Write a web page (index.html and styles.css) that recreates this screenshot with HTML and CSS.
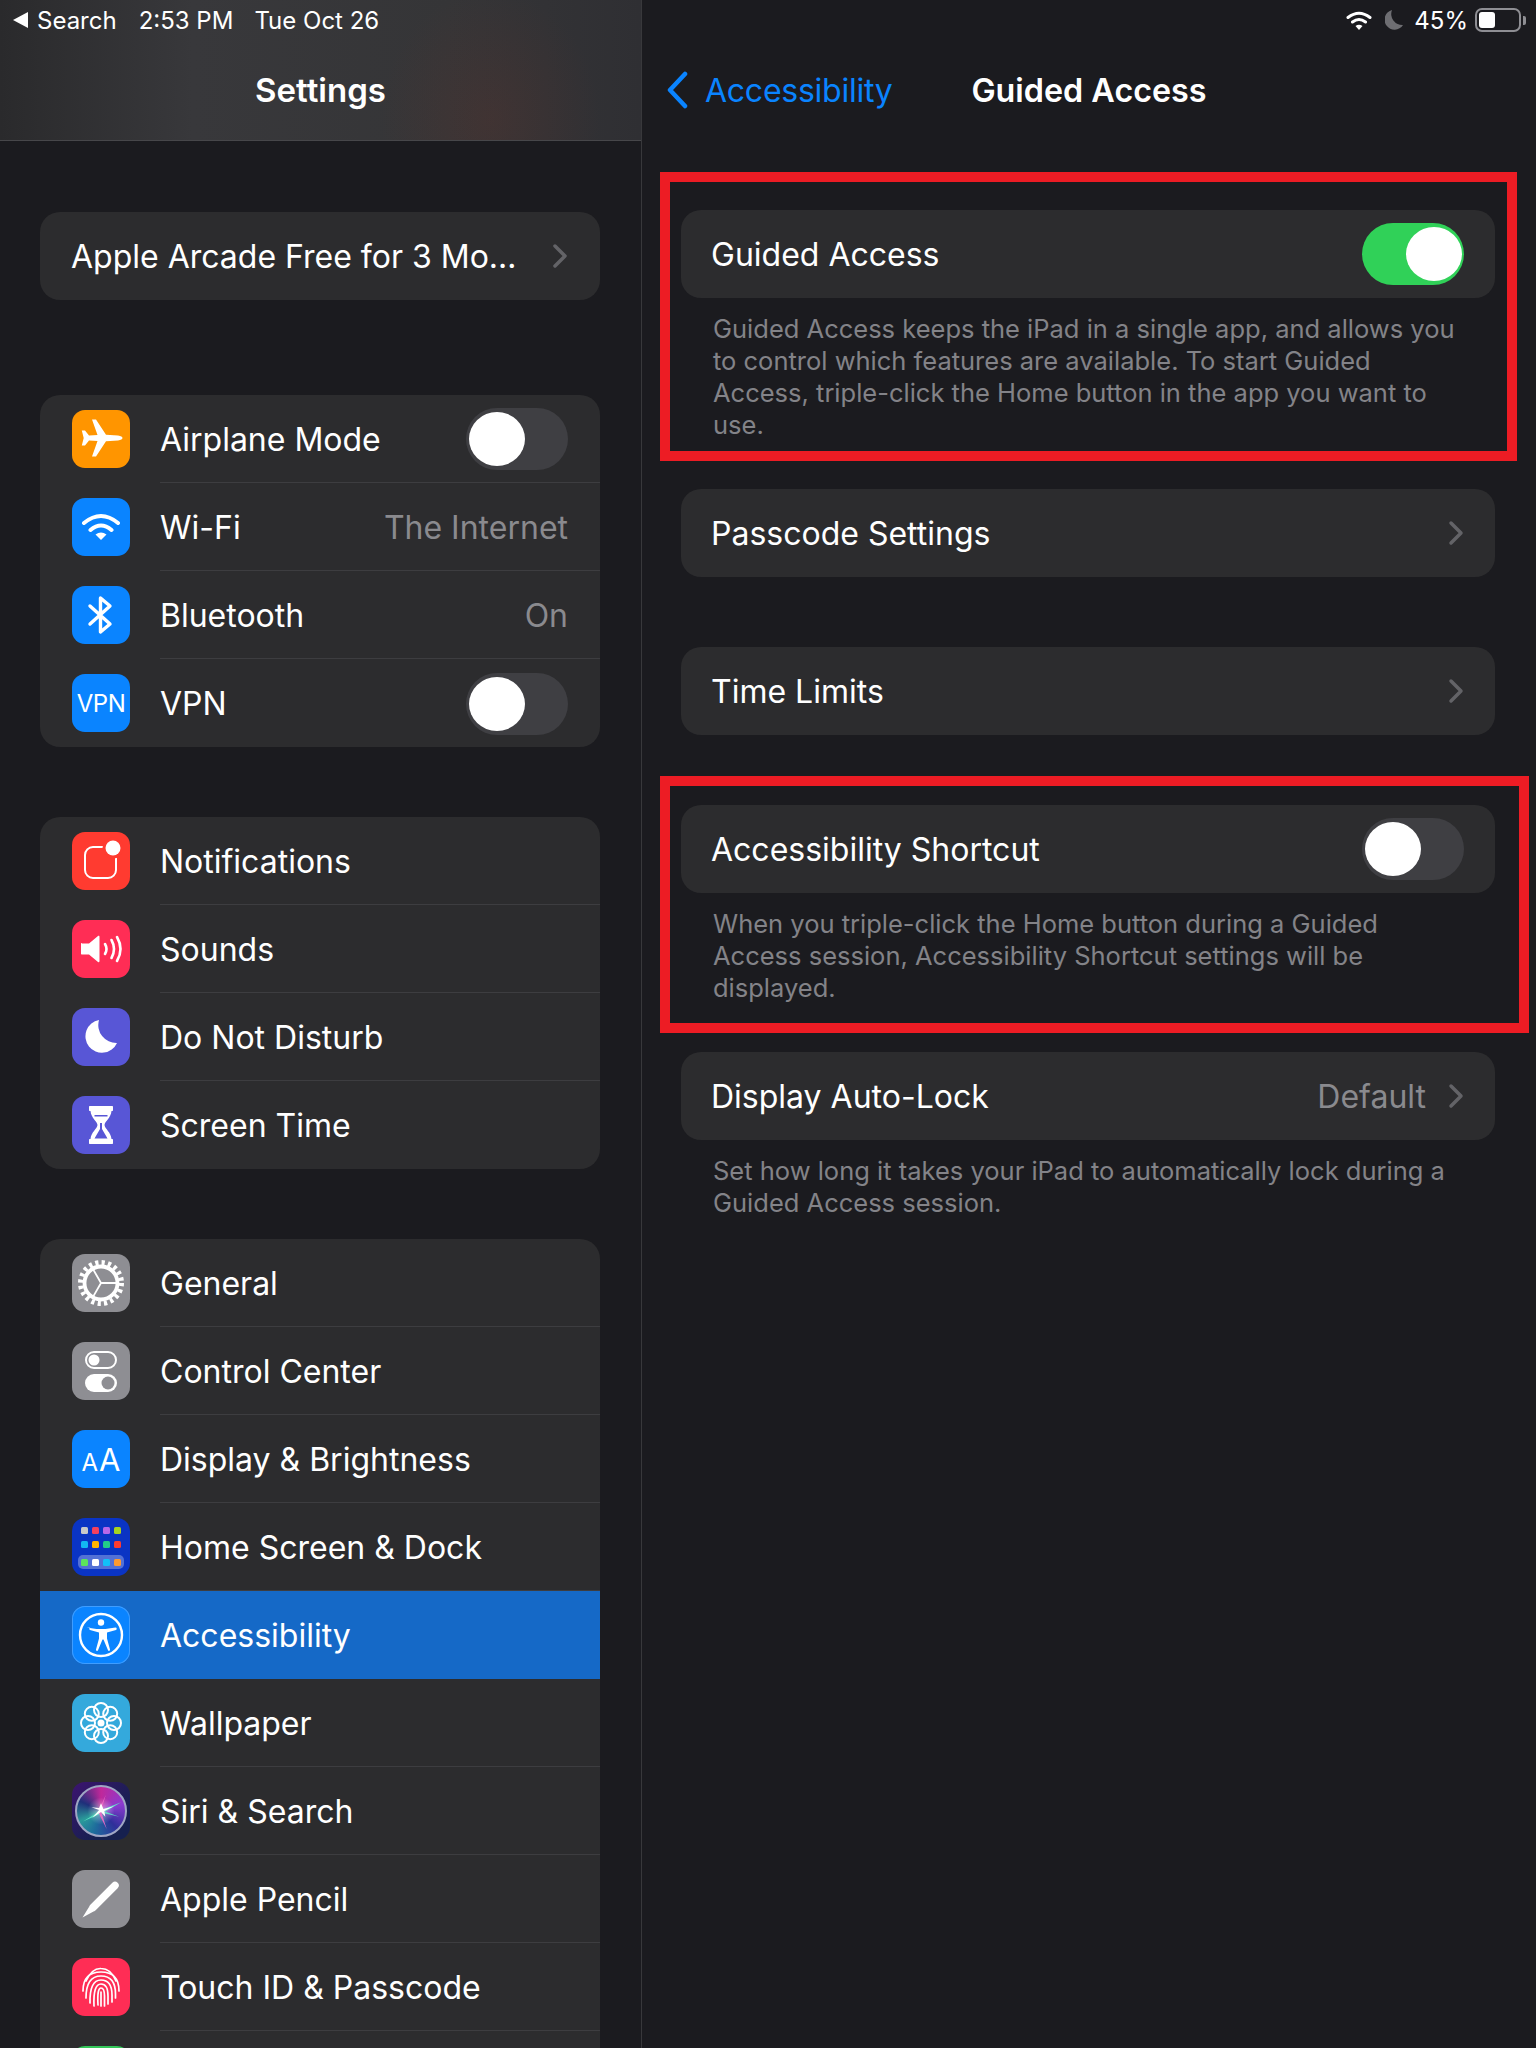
FILE: index.html
```html
<!DOCTYPE html>
<html lang="en">
<head>
    <meta charset="UTF-8">
    <title>Guided Access</title>
    <link rel="stylesheet" href="styles.css">
</head>
<body>
    <div class="sidebar">
        <header class="side-head">
            <div class="status">
                <span class="back-tri"></span>
                <span class="status-search">Search</span>
                <span class="status-time">2:53 PM</span>
                <span>Tue Oct 26</span>
            </div>
            <h1 class="side-title">Settings</h1>
        </header>

        <div class="card promo">
            <div class="row">
                <span class="label">Apple Arcade Free for 3 Mo…</span>
                <svg class="chevron" viewBox="0 0 16 26"><path d="M3 3l10 10L3 23"/></svg>
            </div>
        </div>

        <div class="card group-first">
            <div class="row">
                <span class="icon orange">
                    <svg viewBox="0 0 58 58"><path fill="#fff" d="M46 25.500c3 .4 4.500 1.500 4.500 2.500s-1.500 2.100-4.500 2.500l-12 .8-10 15.200h-4l5.500-15.500-8.500-.5-4 5h-3.200l1.900-7.500-1.900-7.500h3.200l4 5 8.500-.5-5.500-15.500h4l10 15.200z"/></svg>
                </span>
                <div class="row-body">
                    <span class="label">Airplane Mode</span>
                    <span class="toggle"><span class="knob"></span></span>
                </div>
            </div>
            <div class="row">
                <span class="icon blue">
                    <svg viewBox="0 0 58 58"><path class="line" stroke-width="4" d="M12 25Q29 11 46 25M18.500 32Q29 23 39.500 32"/><path fill="#fff" d="M29 42l-5.500-5.500Q29 32.500 34.500 36.500z"/></svg>
                </span>
                <div class="row-body">
                    <span class="label">Wi-Fi</span>
                    <span class="value">The Internet</span>
                </div>
            </div>
            <div class="row">
                <span class="icon blue">
                    <svg viewBox="0 0 58 58"><path class="line" stroke-width="3.400" d="M18 20l20 18-9.500 8V12L38 20 18 38"/></svg>
                </span>
                <div class="row-body">
                    <span class="label">Bluetooth</span>
                    <span class="value">On</span>
                </div>
            </div>
            <div class="row">
                <span class="icon blue"><span class="icon-text vpn">VPN</span></span>
                <div class="row-body">
                    <span class="label">VPN</span>
                    <span class="toggle"><span class="knob"></span></span>
                </div>
            </div>
        </div>

        <div class="card group">
            <div class="row">
                <span class="icon red">
                    <svg viewBox="0 0 58 58"><rect class="line" stroke-width="2" x="13" y="15" width="31" height="31" rx="8"/><circle cx="41" cy="16" r="10.500" fill="#ff3b30"/><circle cx="41" cy="16" r="7.500" fill="#fff"/></svg>
                </span>
                <div class="row-body"><span class="label">Notifications</span></div>
            </div>
            <div class="row">
                <span class="icon pink">
                    <svg viewBox="0 0 58 58"><path fill="#fff" d="M10 23.500h7l9-7.500c1-.5 1.500 0 1.500 1v24c0 1-.5 1.500-1.500 1l-9-7.500h-7c-.7 0-1-.4-1-1v-9.500c0-.6.300-1 1-1z"/><path class="line" stroke-width="2.600" d="M33 24q3 5 0 10M39.500 20q5 9 0 18M45 17q7 12 0 24"/></svg>
                </span>
                <div class="row-body"><span class="label">Sounds</span></div>
            </div>
            <div class="row">
                <span class="icon indigo">
                    <svg viewBox="0 0 58 58"><path fill="#fff" d="M27 12A16.500 16.500 0 1 0 45 35 A18 18 0 0 1 27 12z"/></svg>
                </span>
                <div class="row-body"><span class="label">Do Not Disturb</span></div>
            </div>
            <div class="row">
                <span class="icon indigo">
                    <svg viewBox="0 0 58 58"><path fill="#fff" d="M18 10h22c.7 0 1 .4 1 1v3c0 .6-.3 1-1 1h-.5c-.6 7-6.500 10-7 14 .5 4 6.400 7 7 14h.5c.7 0 1 .4 1 1v3c0 .6-.3 1-1 1H18c-.7 0-1-.4-1-1v-3c0-.6.300-1 1-1h.5c.6-7 6.500-10 7-14-.5-4-6.400-7-7-14H18c-.7 0-1-.4-1-1v-3c0-.6.300-1 1-1z"/><path fill="#5856d6" d="M22.500 19h13v1.500h-13zM28 27h2v6l5.500 9.500h-13L28 33z"/></svg>
                </span>
                <div class="row-body"><span class="label">Screen Time</span></div>
            </div>
        </div>

        <div class="card group">
            <div class="row">
                <span class="icon grey">
                    <svg viewBox="0 0 58 58"><circle fill="none" stroke="#fff" stroke-width="5" stroke-dasharray="3.200 3.240" cx="29" cy="29" r="20.500"/><circle class="line" stroke-width="3.800" cx="29" cy="29" r="16.500"/><path class="line" stroke-width="1.800" d="M29 29h16M29 29l-8-13.900M29 29l-8 13.900"/></svg>
                </span>
                <div class="row-body"><span class="label">General</span></div>
            </div>
            <div class="row">
                <span class="icon grey">
                    <svg viewBox="0 0 58 58"><rect class="line" stroke-width="2" x="14" y="10" width="30" height="16" rx="8"/><circle cx="22" cy="18" r="5.500" fill="#fff"/><rect x="13" y="32" width="32" height="18" rx="9" fill="#fff"/><circle cx="36" cy="41" r="6.500" fill="#8e8e93"/></svg>
                </span>
                <div class="row-body"><span class="label">Control Center</span></div>
            </div>
            <div class="row">
                <span class="icon blue"><span class="icon-text aa"><small>A</small>A</span></span>
                <div class="row-body"><span class="label">Display &amp; Brightness</span></div>
            </div>
            <div class="row">
                <span class="icon navy">
                    <svg viewBox="0 0 58 58">
                        <rect x="6" y="37" width="46" height="14" rx="5" fill="#fff" fill-opacity=".3"/>
                        <rect x="9" y="9" width="7" height="7" rx="1.500" fill="#c9c9c9"/>
                        <rect x="20" y="9" width="7" height="7" rx="1.500" fill="#f4405e"/>
                        <rect x="31" y="9" width="7" height="7" rx="1.500" fill="#b867e8"/>
                        <rect x="42" y="9" width="7" height="7" rx="1.500" fill="#a5d321"/>
                        <rect x="9" y="23" width="7" height="7" rx="1.500" fill="#12b8f2"/>
                        <rect x="20" y="23" width="7" height="7" rx="1.500" fill="#ffb300"/>
                        <rect x="31" y="23" width="7" height="7" rx="1.500" fill="#22cc88"/>
                        <rect x="42" y="23" width="7" height="7" rx="1.500" fill="#ff3b30"/>
                        <rect x="9" y="41" width="7" height="7" rx="1.500" fill="#5ce65c"/>
                        <rect x="20" y="41" width="7" height="7" rx="1.500" fill="#fff"/>
                        <rect x="31" y="41" width="7" height="7" rx="1.500" fill="#12c0f8"/>
                        <rect x="42" y="41" width="7" height="7" rx="1.500" fill="#ff9a2e"/>
                    </svg>
                </span>
                <div class="row-body"><span class="label">Home Screen &amp; Dock</span></div>
            </div>
            <div class="row selected">
                <span class="icon blue ringed">
                    <svg viewBox="0 0 58 58"><circle class="line" stroke-width="2.400" cx="29" cy="29" r="21"/><circle cx="29" cy="16.500" r="3.200" fill="#fff"/><path fill="#fff" d="M14.500 21.500l10 1.500h9l10-1.500c1.500 0 1.500 2 .5 2.500l-9 2.500v6l3 11c.3 1.500-1.500 2-2 .8l-4.500-10.800h-1l-4.500 10.800c-.5 1.200-2.300.7-2-.8l3-11v-6l-9-2.500c-1-.5-1-2.500.5-2.500z"/></svg>
                </span>
                <div class="row-body"><span class="label">Accessibility</span></div>
            </div>
            <div class="row">
                <span class="icon sky">
                    <svg viewBox="0 0 58 58">
                        <g class="line" stroke-width="2">
                            <circle cx="29" cy="16" r="7"/><circle cx="38.200" cy="19.800" r="7"/><circle cx="42" cy="29" r="7"/><circle cx="38.200" cy="38.200" r="7"/>
                            <circle cx="29" cy="42" r="7"/><circle cx="19.800" cy="38.200" r="7"/><circle cx="16" cy="29" r="7"/><circle cx="19.800" cy="19.800" r="7"/>
                        </g>
                        <circle cx="29" cy="29" r="3.500" fill="#fff"/>
                    </svg>
                </span>
                <div class="row-body"><span class="label">Wallpaper</span></div>
            </div>
            <div class="row">
                <span class="icon siri">
                    <span class="siri-orb">
                        <svg viewBox="0 0 50 50">
                            <path fill="#5ff0c8" fill-opacity=".85" d="M25 24L46 16 27 27 44 31zM24 25L6 36 24 28z"/>
                            <path fill="#f06ac8" fill-opacity=".9" d="M25 25l6 19-9-18zM25 25L30 8l-7 16z"/>
                            <path fill="#fff" d="M25 17l2.500 6 11-3-10 5 1 6-4.500-5-9 6 7-8-8-3 8 1z"/>
                        </svg>
                    </span>
                </span>
                <div class="row-body"><span class="label">Siri &amp; Search</span></div>
            </div>
            <div class="row">
                <span class="icon grey">
                    <svg viewBox="0 0 58 58"><path class="line" stroke-width="7.500" d="M43 15.500L21 37.500"/><path fill="#fff" d="M17 37l4.500 4.500-11 6z"/></svg>
                </span>
                <div class="row-body"><span class="label">Apple Pencil</span></div>
            </div>
            <div class="row">
                <span class="icon pink">
                    <svg viewBox="0 0 58 58"><g class="line" stroke-width="1.700">
                        <path d="M14 23Q20 10 29 10.500 39 10.500 44 23"/>
                        <path d="M11 33Q11 14 29 14 47 14 47 33"/>
                        <path d="M14 40Q14 18 29 18 43.500 18 43.500 36v4"/>
                        <path d="M18 45Q17.500 22 29 22 40 22 40 37v7"/>
                        <path d="M22 48Q21 26 29 26 36 26 36 38v8"/>
                        <path d="M26 47q-1-17 3-17 3.500 0 3.500 8v10"/>
                        <path d="M29 34v14"/>
                    </g></svg>
                </span>
                <div class="row-body"><span class="label">Touch ID &amp; Passcode</span></div>
            </div>
            <div class="row">
                <span class="icon green"></span>
                <div class="row-body"></div>
            </div>
        </div>
    </div>

    <main class="detail">
        <header class="detail-head">
            <div class="status status-right">
                <svg class="st-wifi" viewBox="0 0 26 20"><path class="line" stroke-width="3" d="M2 7.500Q13-1 24 7.500M6.500 12Q13 7 19.500 12"/><path fill="#fff" d="M13 20l-3.500-4q3.500-2.500 7 0z"/></svg>
                <svg class="st-moon" viewBox="0 0 18 20"><path fill="#6e6e72" d="M7 0A10 10 0 1 0 18 15 A11 11 0 0 1 7 0z"/></svg>
                <span>45%</span>
                <span class="battery"><span class="battery-fill"></span></span>
                <span class="battery-cap"></span>
            </div>
            <div class="navbar">
                <a class="back">
                    <svg class="back-chevron" viewBox="0 0 24 38"><path d="M20 3L5 19l15 16"/></svg>
                    <span>Accessibility</span>
                </a>
                <h2 class="detail-title">Guided Access</h2>
                <span></span>
            </div>
        </header>

        <section class="block first-block">
            <div class="card">
                <div class="row plain">
                    <span class="label">Guided Access</span>
                    <span class="toggle on"><span class="knob"></span></span>
                </div>
            </div>
            <p class="note">Guided Access keeps the iPad in a single app, and allows you to control which features are available. To start Guided Access, triple-click the Home button in the app you want to use.</p>
            <div class="callout callout-one"></div>
        </section>

        <section class="block passcode">
            <div class="card">
                <div class="row plain">
                    <span class="label">Passcode Settings</span>
                    <svg class="chevron" viewBox="0 0 16 26"><path d="M3 3l10 10L3 23"/></svg>
                </div>
            </div>
        </section>

        <section class="block limits">
            <div class="card">
                <div class="row plain">
                    <span class="label">Time Limits</span>
                    <svg class="chevron" viewBox="0 0 16 26"><path d="M3 3l10 10L3 23"/></svg>
                </div>
            </div>
        </section>

        <section class="block shortcut">
            <div class="card">
                <div class="row plain">
                    <span class="label">Accessibility Shortcut</span>
                    <span class="toggle"><span class="knob"></span></span>
                </div>
            </div>
            <p class="note">When you triple-click the Home button during a Guided Access session, Accessibility Shortcut settings will be displayed.</p>
            <div class="callout callout-two"></div>
        </section>

        <section class="block autolock">
            <div class="card">
                <div class="row plain">
                    <span class="label">Display Auto-Lock</span>
                    <span class="value-group">
                        <span class="value">Default</span>
                        <svg class="chevron" viewBox="0 0 16 26"><path d="M3 3l10 10L3 23"/></svg>
                    </span>
                </div>
            </div>
            <p class="note">Set how long it takes your iPad to automatically lock during a Guided Access session.</p>
        </section>
    </main>
</body>
</html>
```

FILE: styles.css
```css
* {
    box-sizing: border-box;
}

body {
    margin: 0;
    width: 1536px;
    height: 2048px;
    overflow: hidden;
    display: flex;
    background-color: #1b1b1f;
    color: #fff;
    font-family: Inter, "Liberation Sans", sans-serif;
    font-size: 32px;
}

h1, h2, p {
    margin: 0;
    font-weight: 600;
}

svg {
    display: block;
}

.line {
    fill: none;
    stroke: #fff;
    stroke-linecap: round;
    stroke-linejoin: round;
}

/* left column */

.sidebar {
    width: 642px;
    flex-shrink: 0;
    border-right: 1px solid #38383b;
    height: 2048px;
    overflow: hidden;
}

.side-head {
    height: 141px;
    border-bottom: 1px solid #47474a;
    background:
        radial-gradient(ellipse 110px 130px at 490px 120px, rgba(110, 50, 40, 0.22), transparent),
        linear-gradient(90deg, #2a2a2c, #38383b 30%, #353537 70%, #2f2f33);
}

.status {
    height: 40px;
    display: flex;
    align-items: center;
    font-size: 24px;
    padding-left: 13px;
}

.back-tri {
    width: 0;
    height: 0;
    border-top: 8px solid transparent;
    border-bottom: 8px solid transparent;
    border-right: 15px solid #fff;
    margin-right: 9px;
}

.status-search {
    margin-right: 22px;
}

.status-time {
    margin-right: 21px;
}

.side-title {
    font-size: 33px;
    text-align: center;
    line-height: 40px;
    margin-top: 30px;
}

.card {
    background-color: #2c2c2e;
    border-radius: 20px;
    overflow: hidden;
}

.sidebar .card {
    margin-left: 40px;
    margin-right: 41px;
}

.promo {
    margin-top: 71px;
}

.group-first {
    margin-top: 95px;
}

.group {
    margin-top: 70px;
}

.row {
    height: 88px;
    display: flex;
    align-items: center;
    padding-left: 32px;
}

.promo .row {
    justify-content: space-between;
    padding-left: 31px;
    padding-right: 32px;
}

.row.plain {
    justify-content: space-between;
    padding: 0 31px 0 30px;
}

.row.selected {
    background-color: #1569c7;
}

.row.selected .row-body {
    border-bottom-color: transparent;
}

.row-body {
    flex: 1;
    height: 88px;
    margin-left: 30px;
    padding: 1px 32px 0 0;
    display: flex;
    align-items: center;
    justify-content: space-between;
    border-bottom: 1px solid #3d3d40;
}

.row:last-child .row-body {
    border-bottom: none;
}

.value {
    color: #8a8a8e;
}

.value-group {
    display: flex;
    align-items: center;
    gap: 22px;
}

.chevron {
    width: 16px;
    height: 26px;
}

.chevron path {
    fill: none;
    stroke: #636367;
    stroke-width: 3.5;
    stroke-linecap: round;
    stroke-linejoin: round;
}

/* settings icons */

.icon {
    width: 58px;
    height: 58px;
    flex-shrink: 0;
    border-radius: 13px;
    display: flex;
    align-items: center;
    justify-content: center;
}

.icon svg {
    width: 58px;
    height: 58px;
}

.orange { background-color: #ff9500; }
.blue { background-color: #0a84ff; }
.red { background-color: #ff3b30; }
.pink { background-color: #ff2d55; }
.indigo { background-color: #5856d6; }
.grey { background-color: #8e8e93; }
.navy { background-color: #0a34c4; }
.sky { background-color: #34a9dc; }
.green { background-color: #34c759; }

.ringed {
    box-shadow: inset 0 0 0 1px #3f9dff;
}

.icon-text {
    color: #fff;
    font-weight: 400;
}

.vpn {
    font-size: 24px;
    letter-spacing: -0.5px;
}

.aa {
    font-size: 31px;
}

.aa small {
    font-size: 24px;
    margin-right: 1px;
}

.siri {
    background: linear-gradient(135deg, #3c1470, #16204f 70%);
}

.siri-orb {
    width: 52px;
    height: 52px;
    border-radius: 50%;
    border: 2px solid #9fa6c4;
    overflow: hidden;
    background:
        radial-gradient(circle, rgba(255, 255, 255, 0.5), transparent 40%),
        conic-gradient(#c0289a, #8a3ad0 20%, #2f2f9a 38%, #1e6c9c 55%, #2a9a9a 68%, #1f2f7a 82%, #c0289a);
}

.siri-orb svg {
    width: 48px;
    height: 48px;
}

/* toggles */

.toggle {
    width: 102px;
    height: 62px;
    border-radius: 31px;
    background-color: #3f3f43;
    display: flex;
    align-items: center;
    padding: 0 3px;
}

.toggle.on {
    background-color: #30d158;
    justify-content: flex-end;
    padding-right: 2px;
}

.knob {
    width: 56px;
    height: 54px;
    border-radius: 50%;
    background-color: #fff;
}

/* right column */

.detail {
    flex: 1;
}

.detail-head {
    height: 140px;
}

.status-right {
    justify-content: flex-end;
    padding-right: 10px;
}

.st-wifi {
    width: 26px;
    height: 20px;
    margin-right: 13px;
}

.st-moon {
    width: 18px;
    height: 20px;
    margin-right: 11px;
}

.battery {
    width: 46px;
    height: 24px;
    margin-left: 7px;
    border: 2px solid #8e8e93;
    border-radius: 7px;
    padding: 2px;
}

.battery-fill {
    display: block;
    width: 16px;
    height: 16px;
    background-color: #fff;
    border-radius: 3px;
}

.battery-cap {
    width: 3px;
    height: 9px;
    margin-left: 2px;
    background-color: #8e8e93;
    border-radius: 0 2px 2px 0;
}

.navbar {
    display: grid;
    grid-template-columns: 1fr auto 1fr;
    align-items: center;
    height: 40px;
    margin-top: 30px;
}

.back {
    display: flex;
    align-items: center;
    color: #0a84ff;
    padding-left: 23px;
    letter-spacing: -0.25px;
}

.back-chevron {
    width: 24px;
    height: 38px;
    margin-right: 16px;
}

.back-chevron path {
    fill: none;
    stroke: #0a84ff;
    stroke-width: 4.5;
    stroke-linecap: round;
    stroke-linejoin: round;
}

.detail-title {
    font-size: 32.3px;
}

.block {
    position: relative;
    margin: 0 41px 0 39px;
}

.first-block {
    margin-top: 70px;
}

.passcode {
    margin-top: 48px;
}

.limits {
    margin-top: 70px;
}

.shortcut {
    margin-top: 70px;
}

.autolock {
    margin-top: 48px;
}

.note {
    font-size: 25.5px;
    font-weight: 400;
    line-height: 32px;
    color: #838388;
    padding: 15px 24px 0 32px;
}

.callout {
    position: absolute;
    border: 10px solid #ed1c24;
}

.callout-one {
    left: -21px;
    right: -22px;
    top: -38px;
    bottom: -20px;
}

.callout-two {
    left: -21px;
    right: -34px;
    top: -29px;
    bottom: -29px;
}
```
